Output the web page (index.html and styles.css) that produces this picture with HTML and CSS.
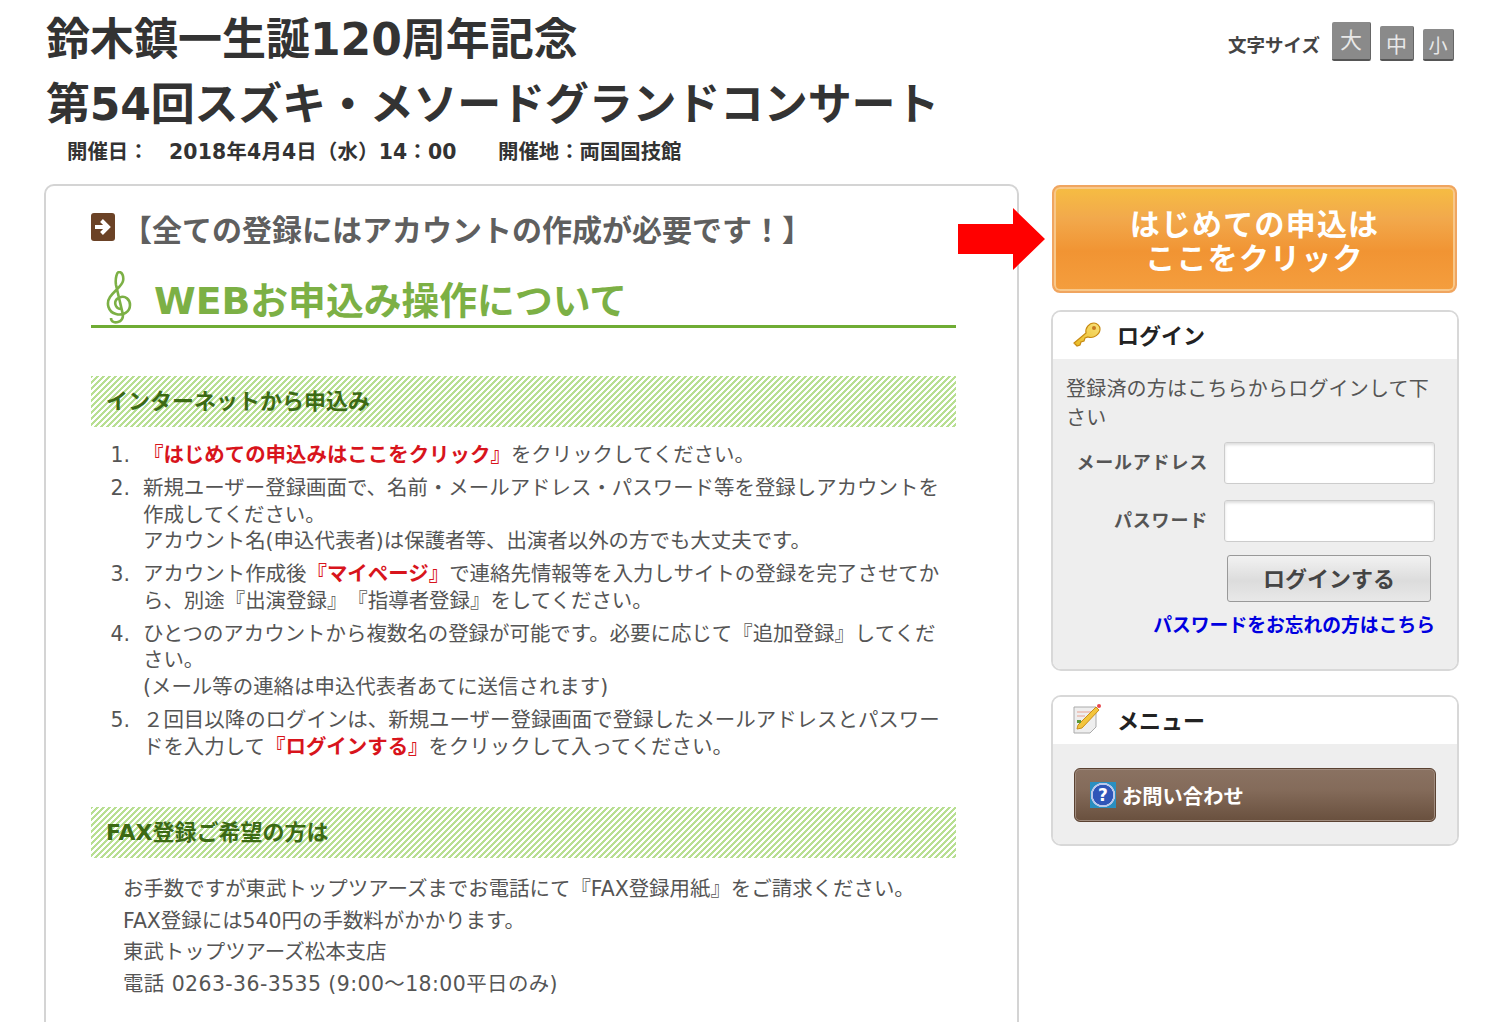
FILE: index.html
```html
<!DOCTYPE html>
<html lang="ja">
<head>
<meta charset="utf-8">
<title>第54回スズキ・メソードグランドコンサート</title>
<link rel="stylesheet" href="styles.css">
</head>
<body>
<div class="page">
  <header class="head">
    <div class="head-text">
      <h1 class="title">鈴木鎮一生誕120周年記念<br><span class="title-sub">第54回スズキ・メソードグランドコンサート</span></h1>
      <p class="meta"><span class="meta-date">開催日：</span><span class="meta-time">2018年4月4日（水）14：00</span><span>開催地：両国国技館</span></p>
    </div>
    <div class="fontsize">
      <span class="fs-label">文字サイズ</span>
      <span class="fs-btn fs-l">大</span>
      <span class="fs-btn fs-m">中</span>
      <span class="fs-btn fs-s">小</span>
    </div>
  </header>
  <div class="columns">
    <main class="main">
      <div class="notice">
        <svg class="notice-icon" viewBox="0 0 24 28" width="24" height="28"><rect width="24" height="28" rx="3" fill="#6b4226"/><path d="M4 14h11M10.500 7.500l6.500 6.500-6.500 6.500" fill="none" stroke="#fff" stroke-width="4"/></svg>
        <span>【全ての登録にはアカウントの作成が必要です！】</span>
      </div>
      <h2 class="section-title">
        <svg class="clef" viewBox="0 0 26 54" width="26" height="54"><path d="M5 47c0 4 4 5 7 4 4-1 5-4 5-7L10 14C9 7 11 1 13 1c3 0 5 4 4 9-1 5-8 9-13 16-4 6-2 15 6 17 7 2 14-2 14-9 0-6-5-9-9-8-5 1-7 5-5 9 1 2 3 3 5 3" fill="none" stroke="#7cb045" stroke-width="2.600"/></svg>
        <span>WEBお申込み操作について</span>
      </h2>
      <h3 class="band band-first">インターネットから申込み</h3>
      <ol class="steps">
        <li><em>『はじめての申込みはここをクリック』</em>をクリックしてください。</li>
        <li>新規ユーザー登録画面で、名前・メールアドレス・パスワード等を登録しアカウントを作成してください。<br>アカウント名(申込代表者)は保護者等、出演者以外の方でも大丈夫です。</li>
        <li>アカウント作成後<em>『マイページ』</em>で連絡先情報等を入力しサイトの登録を完了させてから、別途『出演登録』『指導者登録』をしてください。</li>
        <li>ひとつのアカウントから複数名の登録が可能です。必要に応じて『追加登録』してください。<br>(メール等の連絡は申込代表者あてに送信されます)</li>
        <li>２回目以降のログインは、新規ユーザー登録画面で登録したメールアドレスとパスワードを入力して<em>『ログインする』</em>をクリックして入ってください。</li>
      </ol>
      <h3 class="band band-second">FAX登録ご希望の方は</h3>
      <div class="fax">
        <p>お手数ですが東武トップツアーズまでお電話にて『FAX登録用紙』をご請求ください。</p>
        <p>FAX登録には540円の手数料がかかります。</p>
        <p>東武トップツアーズ松本支店</p>
        <p class="fax-tel">電話 0263-36-3535 (9:00～18:00平日のみ)</p>
      </div>
    </main>
    <aside class="side">
      <svg class="red-arrow" viewBox="0 0 87 62" width="87" height="62"><path d="M0 16h55V0l32 31-32 31V46H0z" fill="#f00"/></svg>
      <a class="start-btn" href="#">はじめての申込は<br>ここをクリック</a>
      <section class="box box-login">
        <h4 class="box-head">
          <svg class="box-icon" viewBox="0 0 30 28" width="30" height="28"><defs><linearGradient id="k" x1="0" y1="1" x2="1" y2="0"><stop offset="0" stop-color="#e8b820"/><stop offset="1" stop-color="#f9e27a"/></linearGradient></defs><path d="M2 23l3 3 3-1 1-3 3-1 1-3 3-1c6 2 12-3 12-8 0-3-3-6-6-6-5 0-9 5-8 10z" fill="url(#k)" stroke="#c78a12" stroke-width="1.200"/><circle cx="22" cy="8" r="2" fill="#c77a20"/></svg>
          <span>ログイン</span>
        </h4>
        <div class="box-body login-body">
          <p class="login-lead">登録済の方はこちらからログインして下さい</p>
          <div class="field"><label>メールアドレス</label><span class="input"></span></div>
          <div class="field"><label>パスワード</label><span class="input"></span></div>
          <div class="submit-row"><a class="login-btn" href="#">ログインする</a></div>
          <a class="forgot" href="#">パスワードをお忘れの方はこちら</a>
        </div>
      </section>
      <section class="box box-menu">
        <h4 class="box-head">
          <svg class="box-icon" viewBox="0 0 30 32" width="30" height="32"><path d="M2 4h22v20l-6 6H2z" fill="#eee" stroke="#aaa"/><path d="M5 9h16M5 13h8" stroke="#e8a090"/><path d="M6 22L24 4l3 3L10 25l-5 1z" fill="#f3c53c" stroke="#c98f1a"/><circle cx="27" cy="3" r="2" fill="#e8484d"/><path d="M5 17h4v3H5z" fill="#5a9a3a"/></svg>
          <span>メニュー</span>
        </h4>
        <div class="box-body menu-body">
          <a class="menu-btn" href="#">
            <span class="q-icon">?</span>
            <span>お問い合わせ</span>
          </a>
        </div>
      </section>
    </aside>
  </div>
</div>
</body>
</html>
```
FILE: styles.css
```css
* { box-sizing: border-box; }
html, body { margin: 0; padding: 0; height: 1022px; overflow: hidden; background: #fff; }
body { font-family: "DejaVu Sans", "Noto Sans CJK JP", sans-serif; color: #555; text-spacing-trim: space-all; }
.title, .meta, .fs-label, .notice, .section-title, .band, .start-btn, .box-head, .field label, .login-btn, .forgot, .menu-btn, .steps em {
  font-weight: 700;
}
.page { padding: 0 41px 0 44px; }
.head { display: flex; justify-content: space-between; height: 184px; }
.head-text { padding-left: 2px; }
.title { margin: 0; padding-top: 7px; font-size: 44px; line-height: 65px; color: #333; }
.title-sub { letter-spacing: -.200px; }
.meta { margin: 0; padding-top: 1px; padding-left: 21px; font-size: 20.400px; line-height: 28px; color: #333; display: flex; }
.meta-date { width: 102px; }
.meta-time { width: 329px; letter-spacing: .180px; }
.fontsize { display: flex; align-items: flex-end; height: 61px; gap: 9px; margin-right: 5px; }
.fs-label { font-size: 18.500px; color: #444; line-height: 30px; margin-right: 3px; }
.fs-btn { display: flex; align-items: center; justify-content: center; background: #8a8a8a; color: #e8e8e8; border-radius: 2px; border-right: 1px solid #666; border-bottom: 2px solid #555; }
.fs-l { width: 39px; height: 39px; font-size: 22px; padding-bottom: 6px; }
.fs-m { width: 34px; height: 35px; font-size: 21px; }
.fs-s { width: 31px; height: 32px; font-size: 19px; }

.columns { display: grid; grid-template-columns: 975px 406px; column-gap: 33px; align-items: start; }
.main { height: 900px; border: 2px solid #d4d4d4; border-radius: 10px; padding: 23px 61px 0 45px; background: #fff; }
.notice { display: flex; align-items: center; gap: 7px; height: 40px; font-size: 30px; color: #5f5f5f; }
.notice span { padding-bottom: 2px; }
.notice-icon { flex: none; margin-top: -4px; }
.section-title { margin: 0; display: flex; align-items: flex-end; height: 79px; padding: 0 0 0 15px; gap: 22px; font-size: 37.800px; line-height: 48px; color: #7cb045; border-bottom: 3px solid #6fac34; }
.clef { flex: none; }
.band { margin: 0; height: 51px; padding: 0 0 5px 15px; display: flex; align-items: center; font-size: 22px; color: #3c6a14; background: repeating-linear-gradient(135deg, #b8df92 0, #b8df92 2.120px, #fff 2.120px, #fff 4.240px); }
.band-first { margin-top: 48px; }
.band-second { margin-top: 47px; }
.steps { margin: 15px 0 0; padding: 0 12px 0 52px; font-size: 20.450px; line-height: 26.600px; }
.steps li { margin-bottom: 6.400px; }
.steps li::marker { content: counter(list-item) ".\00a0\00a0"; }
.steps em { font-style: normal; color: #d8141c; }
.fax { margin-top: 16px; padding-left: 32px; font-size: 20.450px; line-height: 31.600px; }
.fax p { margin: 0; }
.fax .fax-tel { letter-spacing: .420px; }

.side { position: relative; display: flex; flex-direction: column; }
.red-arrow { position: absolute; left: -94px; top: 24px; }
.start-btn { display: flex; align-items: center; justify-content: center; text-align: center; width: 405px; height: 108px; margin-top: 1px; padding-top: 5px; border: 2px solid #f0a560; box-shadow: inset 0 0 0 2px #f8c88a; border-radius: 8px; font-size: 30px; line-height: 34px; letter-spacing: 1.200px; color: #fff; text-decoration: none; background: linear-gradient(#f6bd42, #f2a94c 30%, #f19433 62%, #f49e3e); }
.box { width: 408px; border: 2px solid #d8d8d8; border-radius: 10px; overflow: hidden; margin-left: -1px; }
.box-login { margin-top: 17px; }
.box-menu { margin-top: 24px; }
.box-head { margin: 0; display: flex; align-items: center; gap: 15px; height: 47px; padding: 0 0 4px 19px; font-size: 22px; color: #222; background: #fff; }
.box-icon { flex: none; }
.box-body { background: #eee; }
.login-body { height: 310px; padding: 16px 22px 0 13px; }
.login-lead { margin: 0; font-size: 20px; line-height: 29px; letter-spacing: .200px; color: #555; }
.field { display: flex; align-items: center; justify-content: flex-end; gap: 16px; margin-top: 9px; }
.field + .field { margin-top: 16px; }
.field label { font-size: 18px; color: #555; letter-spacing: .800px; padding-bottom: 5px; }
.input { display: block; width: 211px; height: 42px; background: #fff; border: 1px solid #ccc; border-radius: 3px; box-shadow: inset 0 2px 3px #ddd; }
.submit-row { display: flex; justify-content: flex-end; margin-top: 13px; }
.login-btn { display: flex; align-items: center; justify-content: center; width: 204px; height: 47px; margin-right: 4px; padding-bottom: 3px; border: 1px solid #999; border-radius: 3px; font-size: 22px; color: #444; text-decoration: none; background: linear-gradient(#f2f2f2, #dcdcdc 55%, #e8e8e8); }
.forgot { display: block; text-align: right; margin-top: 10px; font-size: 18.800px; line-height: 27px; color: #0000e0; text-decoration: none; }
.menu-body { height: 100px; padding: 24px 21px 0 21px; }
.menu-btn { display: flex; align-items: center; gap: 6px; height: 54px; padding-left: 15px; border: 1px solid #5a4232; border-radius: 6px; font-size: 20.300px; color: #fff; text-decoration: none; background: linear-gradient(#8a7262, #846b5a 40%, #69503e); box-shadow: inset 0 0 0 1px #a08c7e; }
.q-icon { flex: none; display: flex; align-items: center; justify-content: center; width: 26px; height: 26px; font-size: 17px; color: #fff; background: radial-gradient(circle, #2f56b8 0 10px, #b8c8ea 10.500px 12px, #2a8fc0 12.500px); }
```
